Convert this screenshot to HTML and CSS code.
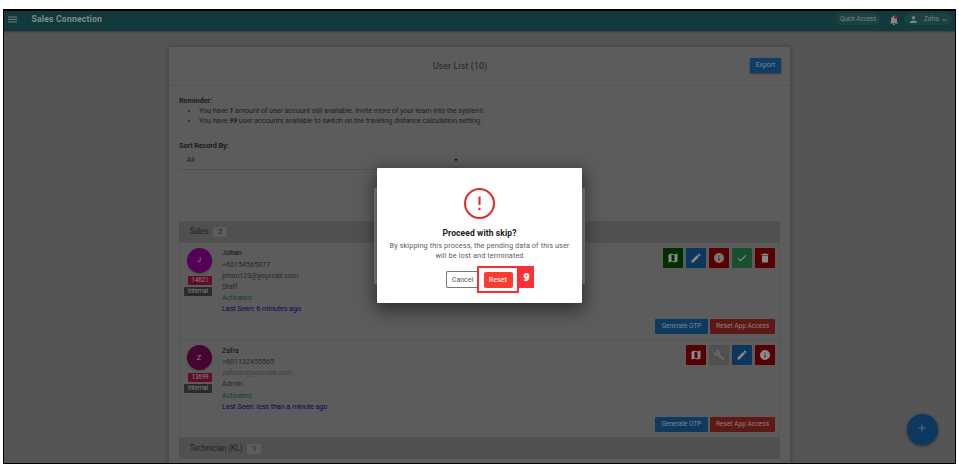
FILE: index.html
```html
<!DOCTYPE html>
<html lang="en">
<head>
<meta charset="utf-8">
<title>Sales Connection</title>
<link rel="stylesheet" href="styles.css">
</head>
<body>
<svg class="defs" width="0" height="0">
  <symbol id="map" viewBox="0 0 24 24"><path d="M20.5 3l-.16.03L15 5.1 9 3 3.36 4.9c-.21.07-.36.25-.36.48V20.500c0 .28.22.5.5.5l.16-.03L9 18.900l6 2.100 5.640-1.900c.21-.07.36-.25.36-.48V3.500c0-.28-.22-.5-.5-.5zM15 19l-6-2.110V5l6 2.110V19z"/></symbol>
  <symbol id="edit" viewBox="0 0 24 24"><path d="M3 17.250V21h3.750L17.810 9.940l-3.750-3.750L3 17.250zM20.710 7.040a1 1 0 0 0 0-1.410l-2.340-2.340a1 1 0 0 0-1.410 0l-1.830 1.830 3.750 3.750 1.830-1.830z"/></symbol>
  <symbol id="info" viewBox="0 0 24 24"><path d="M12 2a10 10 0 1 0 0 20 10 10 0 0 0 0-20zm1 15h-2v-6h2v6zm0-8h-2V7h2v2z"/></symbol>
  <symbol id="check" viewBox="0 0 24 24"><path d="M9 16.170L4.830 12l-1.420 1.410L9 19 21 7l-1.410-1.410z"/></symbol>
  <symbol id="trash" viewBox="0 0 24 24"><path d="M6 19c0 1.100.9 2 2 2h8c1.100 0 2-.9 2-2V7H6v12zM19 4h-3.500l-1-1h-5l-1 1H5v2h14V4z"/></symbol>
  <symbol id="wrench" viewBox="0 0 24 24"><path d="M22.700 19l-9.100-9.100c.9-2.300.4-5-1.500-6.900-2-2-5-2.400-7.400-1.300L9 6 6 9 1.600 4.700C.4 7.100.9 10.100 2.900 12.100c1.900 1.900 4.600 2.400 6.900 1.500l9.100 9.100c.4.4 1 .4 1.400 0l2.300-2.300c.5-.4.5-1.100.1-1.400z"/></symbol>
</svg>
<div class="frame">
  <header class="topbar">
    <svg class="menu" viewBox="0 0 10 7"><path d="M0 .8h10M0 3.500h10M0 6.200h10"/></svg>
    <h1 class="brand">Sales Connection</h1>
    <span class="pill quick">Quick Access</span>
    <span class="bell">
      <svg viewBox="4 2 16 20"><path d="M12 22c1.100 0 2-.9 2-2h-4c0 1.100.9 2 2 2zm6-6v-5c0-3.070-1.640-5.640-4.500-6.320V4a1.500 1.500 0 0 0-3 0v.68C7.630 5.360 6 7.920 6 11v5l-2 2v1h16v-1l-2-2z"/></svg>
    </span>
    <span class="pill user">
      <svg class="person" viewBox="4 4 16 16"><path d="M12 12a4 4 0 1 0 0-8 4 4 0 0 0 0 8zm0 2c-2.670 0-8 1.340-8 4v2h16v-2c0-2.660-5.330-4-8-4z"/></svg>
      <span class="user-name">Zafra</span>
      <svg class="chev" viewBox="0 0 8 5"><path d="M1 1l3 3 3-3"/></svg>
    </span>
  </header>
  <main class="card">
    <div class="card-head">
      <h2>User List (10)</h2>
      <button class="export">Export</button>
    </div>
    <div class="card-body">
      <div class="strong">Reminder:</div>
      <ul class="notes">
        <li>You have <b>1</b> amount of user account still available. Invite more of your team into the system!</li>
        <li>You have <b>99</b> user accounts available to switch on the traveling distance calculation setting.</li>
      </ul>
      <div class="strong sort">Sort Record By:</div>
      <div class="select"><span>All</span><i class="caret"></i></div>
      <section class="list">
        <div class="group"><span class="group-name">Sales</span><span class="count">2</span></div>
        <article class="row">
          <div class="who"><span class="avatar johan">J</span><span class="tag id">14621</span><span class="tag kind">Internal</span></div>
          <div class="info">
            <div class="name">Johan</div><div>+60154565877</div><div>johan123@yopmail.com</div><div>Staff</div>
            <div class="active">Activated</div><div class="seen">Last Seen: 6 minutes ago</div>
          </div>
          <div class="side">
            <div class="icons">
              <span class="ib green"><svg><use href="#map"/></svg></span>
              <span class="ib blue"><svg><use href="#edit"/></svg></span>
              <span class="ib red dimmed"><svg><use href="#info"/></svg></span>
              <span class="ib mint"><svg><use href="#check"/></svg></span>
              <span class="ib red"><svg><use href="#trash"/></svg></span>
            </div>
            <div class="acts"><button class="otp">Generate OTP</button><button class="reset-app">Reset App Access</button></div>
          </div>
        </article>
        <article class="row">
          <div class="who"><span class="avatar zafra">Z</span><span class="tag id">13699</span><span class="tag kind">Internal</span></div>
          <div class="info">
            <div class="name">Zafra</div><div>+601122455565</div><div class="faint">zafrasc@yopmail.com</div><div>Admin</div>
            <div class="active">Activated</div><div class="seen">Last Seen: less than a minute ago</div>
          </div>
          <div class="side">
            <div class="icons">
              <span class="ib red"><svg><use href="#map"/></svg></span>
              <span class="ib grey"><svg><use href="#wrench"/></svg></span>
              <span class="ib blue"><svg><use href="#edit"/></svg></span>
              <span class="ib red"><svg><use href="#info"/></svg></span>
            </div>
            <div class="acts"><button class="otp">Generate OTP</button><button class="reset-app">Reset App Access</button></div>
          </div>
        </article>
        <div class="group"><span class="group-name">Technician (KL)</span><span class="count">1</span></div>
      </section>
    </div>
  </main>
  <span class="fab"><svg viewBox="0 0 8 8"><path d="M4 .5v7M.5 4h7"/></svg></span>
</div>
<div class="under-dialog"></div>
<div class="dialog" role="dialog">
  <svg class="alert" viewBox="0 0 30 30"><circle cx="15" cy="15" r="14"/><path d="M15 8.300v8.200M15 19v2.600"/></svg>
  <h3>Proceed with skip?</h3>
  <p>By skipping this process, the pending data of this user<br>will be lost and terminated</p>
  <div class="dialog-acts">
    <button class="cancel">Cancel</button>
    <span class="mark"><button class="reset">Reset</button></span>
    <span class="step">9</span>
  </div>
</div>
</body>
</html>
```

FILE: styles.css
```css
* { box-sizing: border-box; }
body { margin: 0; width: 959px; height: 467px; overflow: hidden; background: #fff; font: 7.35px/11.2px Roboto, "Liberation Sans", sans-serif; color: #222; position: relative; }
h1, h2, h3, p, ul { margin: 0; padding: 0; }
button { font-family: inherit; border: 0; padding: 0; margin: 0; }
svg { display: block; fill: currentColor; }
.defs { position: absolute; }

.frame { position: relative; margin: 9px 0 0 3px; width: 953px; height: 455px; border: 1px solid #000; border-top: 2px solid #000; background: #555; overflow: hidden; }
.topbar { display: flex; align-items: center; height: 20px; padding: 0 3px 4px 4px; background: #12393c; color: #858585; box-shadow: 0 1px 2px rgba(0,0,0,.3); }
.menu { width: 9px; height: 7px; stroke: #7e8888; stroke-width: 1; }
.brand { margin-left: 14.500px; font-size: 8.700px; line-height: 12px; font-weight: 700; color: #7f8b8c; letter-spacing: .15px; }
.pill { display: flex; align-items: center; height: 12px; padding-top: 1px; border-radius: 6px; background: #1c4144; color: #748182; font-size: 6.500px; }
.quick { margin-left: auto; width: 44px; justify-content: center; letter-spacing: -.25px; }
.bell { position: relative; margin: 2px 6px 0 10px; color: #80898a; }
.bell svg { width: 8px; height: 10px; }
.bell::after { content: ""; position: absolute; width: 4px; height: 4px; right: 0; top: 0; border-radius: 2px; background: #7c2425; }
.user { width: 48px; padding-left: 6px; }
.person { width: 7px; height: 7px; }
.user-name { margin-left: 7px; letter-spacing: -.1px; }
.chev { width: 5px; height: 4px; margin-left: auto; margin-right: 5px; fill: none; stroke: currentColor; stroke-width: 1.600; }

.card { margin: 16px 0 0 165px; width: 621px; height: 430px; background: #5c5c5c; box-shadow: 0 0 6px rgba(0,0,0,.3); }
.card-head { display: grid; grid-template-columns: 582px 30px; align-items: center; height: 39px; padding: 0 9px 2px 0; border-bottom: 1px solid #555; }
.card-head h2 { padding-top: 3px; text-align: center; font-size: 8.800px; font-weight: 400; color: #242424; letter-spacing: .15px; }
.export { justify-self: end; width: 31px; height: 15px; background: #0f3d66; color: #768595; font-size: 7px; letter-spacing: -.1px; border-radius: 1px; box-shadow: 0 1px 2px rgba(0,0,0,.4); }
.card-body { padding: 9.500px 10px 0; letter-spacing: -.135px; }
.strong { font-weight: 700; color: #1d1d1d; line-height: 10px; }
.notes { padding-left: 20px; line-height: 10px; }
.notes b { font-style: italic; }
.sort { margin-top: 15px; }
.select { display: flex; align-items: center; justify-content: space-between; width: 290px; height: 19.500px; margin-bottom: 50.500px; padding: 0 11px 0 7.500px; border-bottom: 1px solid #535353; }
.caret { border: 2px solid transparent; border-top-color: #0c0c0c; margin-top: 2px; }

.list { border-left: 1px solid #565656; border-right: 1px solid #565656; }
.group { display: flex; align-items: center; height: 22px; margin: 0 -1px; padding-left: 10.500px; background: #505050; color: #252525; font-size: 8.200px; letter-spacing: -.25px; }
.count { display: flex; align-items: center; justify-content: center; width: 13.500px; height: 10px; margin-left: 5px; border-radius: 1px; background: #5d5d5d; font-size: 7.500px; }
.row + .group { padding-top: 2px; }
.row { display: flex; height: 97.500px; border-bottom: 1px solid #555; }
.row + .row { height: 96.500px; border: 0; }
.who { width: 42px; padding: 5px 10px 0 0; display: flex; flex-direction: column; align-items: flex-end; flex: none; }
.avatar { width: 25px; height: 25px; margin-right: .5px; border-radius: 50%; display: flex; align-items: center; justify-content: center; color: #888; font-size: 7.500px; box-shadow: 0 1px 2px rgba(0,0,0,.25); }
.johan { background: #550058; }
.zafra { background: #45062f; }
.tag { display: flex; align-items: center; justify-content: center; border-radius: 1px; height: 9px; color: #858585; font-size: 6.300px; line-height: 9px; }
.id { width: 24px; margin-top: 3px; background: #5f0d29; }
.kind { width: 28px; margin-top: 2px; background: #2b2b2b; }
.info { padding-top: 4.800px; color: #2b2b2b; }
.name { color: #141414; }
.faint { color: #404040; }
.active { color: #1a4229; }
.seen { color: #0b0b55; }
.side { margin-left: auto; padding: 5px 4px 5px 0; display: flex; flex-direction: column; justify-content: space-between; align-items: flex-end; }
.icons { display: flex; gap: 3px; }
.ib { width: 20px; height: 20px; border-radius: 1px; display: grid; place-items: center; color: #8a8a8a; }
.ib svg { width: 12px; height: 12px; }
.green { background: #002f00; }
.blue { background: #0c365b; }
.red { background: #560000; }
.mint { background: #18502f; }
.grey { background: #505050; color: #676767; }
.dimmed { color: #777; }
.acts { display: flex; gap: 2px; }
.acts button { height: 15.500px; border-radius: 1px; font-size: 6.600px; color: #7c8690; letter-spacing: -.08px; }
.acts .otp { width: 53px; background: #0e3a60; }
.acts .reset-app { width: 65px; background: #5e1917; color: #95807f; letter-spacing: 0; }
.row + .row .side { padding-bottom: 4.500px; }
.fab { position: absolute; right: 17px; bottom: 18px; width: 31px; height: 31px; border-radius: 50%; background: #0d3961; box-shadow: 0 1px 3px rgba(0,0,0,.5); display: grid; place-items: center; padding: 0 1px 3px 0; }
.fab svg { width: 8px; height: 8px; stroke: #7b858d; stroke-width: .7; }

.under-dialog { position: absolute; left: 374px; top: 188px; width: 211px; height: 96px; background: #888; border-radius: 1px; }
.dialog { position: absolute; left: 377px; top: 168px; width: 205px; height: 135px; padding-top: 20px; background: #fff; border-radius: 1px; box-shadow: 0 5px 18px 2px rgba(0,0,0,.5); display: flex; flex-direction: column; align-items: center; text-align: center; }
.alert { width: 31px; height: 31px; fill: none; stroke: #db3027; stroke-width: 2; }
.dialog h3 { margin-top: 8.500px; font-size: 8.500px; line-height: 11px; font-weight: 700; color: #202020; letter-spacing: .1px; }
.dialog p { margin-top: 2px; font-size: 7.350px; line-height: 10.500px; color: #606060; white-space: nowrap; letter-spacing: .08px; }
.dialog-acts { display: flex; align-items: center; margin: 4.500px 0 0 18px; width: 85px; height: 27px; }
.cancel { flex: none; width: 32px; height: 17px; margin-right: -1px; border: 1px solid #6d7b86; border-right: 0; border-radius: 2px 0 0 2px; background: #fff; color: #555; font-size: 7px; }
.mark { flex: none; width: 42px; height: 27px; border: 2px solid #ff2b32; display: grid; place-items: center; background: #fff; }
.reset { width: 29px; height: 16px; border-radius: 2px; background: #fb3c30; color: #ffe4e0; font-size: 7px; font-weight: 500; }
.step { flex: none; width: 15px; height: 22px; align-self: flex-start; background: #ff3035; color: #fff; font: 800 10.500px/22px "Open Sans", "Liberation Sans", sans-serif; }
```
